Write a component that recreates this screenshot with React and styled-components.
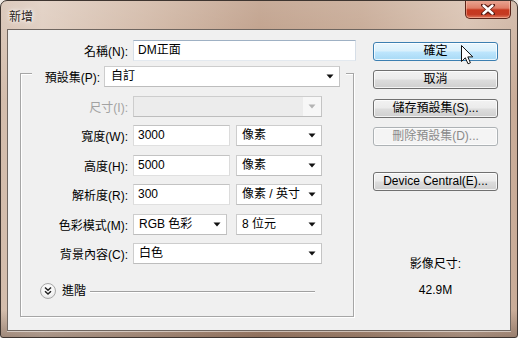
import React from "react";
import styled, { createGlobalStyle } from "styled-components";

const GlobalStyle = createGlobalStyle`
  html, body {
    margin: 0;
    padding: 0;
    background: #efe9e3;
  }
  body {
    font-family: "Liberation Sans", "Noto Sans CJK TC", sans-serif;
    font-size: 12px;
    color: #000;
  }
`;

//window frame
const Window = styled.div`
  position: relative;
  width: 518px;
  height: 338px;
  box-sizing: border-box;
  border: 1px solid #3e3530;
  border-radius: 7px 7px 3px 3px;
  overflow: hidden;
  display: flex;
  flex-direction: column;
  background: linear-gradient(
      180deg,
      rgba(255, 255, 255, 0.22) 0%,
      rgba(255, 255, 255, 0) 30%,
      rgba(0, 0, 0, 0) 92%,
      rgba(60, 40, 30, 0.35) 100%
    ),
    linear-gradient(
      90deg,
      #d3bcab 0%,
      #dcc8b9 8%,
      #cdb19d 28%,
      #b8947c 50%,
      #c09f88 70%,
      #d4baa7 90%,
      #c9ac98 100%
    );
`;

const TitleBar = styled.div`
  height: 28px;
  display: flex;
  align-items: center;
  padding: 0 6px 0 8px;
`;

const Title = styled.span`
  font-family: "Noto Sans CJK TC", sans-serif;
  font-size: 12px;
  color: #2a2420;
  text-shadow: 0 0 6px #fff, 0 0 3px #fff;
`;

const CloseButton = styled.div`
  margin-left: auto;
  align-self: flex-start;
  margin-top: -1px;
  width: 46px;
  height: 19px;
  box-sizing: border-box;
  border: 1px solid #5b2419;
  border-top: none;
  border-radius: 0 0 5px 5px;
  display: flex;
  align-items: center;
  justify-content: center;
  background: linear-gradient(
    180deg,
    #eaa996 0%,
    #df7e67 45%,
    #c7381f 55%,
    #c43a22 80%,
    #e07a5f 100%
  );
  box-shadow: inset 0 0 0 1px rgba(255, 210, 190, 0.45);
`;

//client area
const Client = styled.div`
  flex: 1;
  margin: 0 6px 6px 6px;
  border: 1px solid #6f6660;
  background: #f0f0f0;
  display: flex;
  box-shadow: 0 1px 0 rgba(255, 255, 255, 0.5);
`;

const LeftColumn = styled.div`
  width: 365px;
  padding-top: 10px;
  display: flex;
  flex-direction: column;
`;

const RightColumn = styled.div`
  width: 125px;
  padding-top: 11.5px;
  display: flex;
  flex-direction: column;
  align-items: stretch;
`;

const Row = styled.div`
  display: flex;
  align-items: center;
  height: 21px;
  gap: ${(p) => p.gap || 5}px;
`;

const Label = styled.span`
  width: ${(p) => p.width}px;
  flex-shrink: 0;
  text-align: right;
  white-space: nowrap;
  color: ${(p) => (p.disabled ? "#a2a2a2" : "#000")};
`;

const TextBox = styled.div`
  width: ${(p) => p.width}px;
  height: 21px;
  box-sizing: border-box;
  background: #fff;
  border: 1px solid;
  border-color: ${(p) =>
    p.blue ? "#9fb1c4 #d6dee7 #e3e9ef #d6dee7" : "#c3c3c3 #dcdcdc #e0e0e0 #dcdcdc"};
  padding: 0 4px;
  display: flex;
  align-items: center;
  line-height: 19px;
`;

const Select = styled.div`
  position: relative;
  width: ${(p) => p.width}px;
  height: 21px;
  box-sizing: border-box;
  background: ${(p) => (p.disabled ? "#ececec" : "#fff")};
  border: 1px solid;
  border-color: #cdcdcd #c4c4c4 #bdbdbd #cdcdcd;
  padding: 0 ${(p) => p.pad || 5}px;
  display: flex;
  align-items: center;
  line-height: 19px;
  white-space: nowrap;
`;

const SelectText = styled.span`
  flex: 1;
`;

const ArrowBox = styled.span`
  width: 18px;
  height: 19px;
  margin-right: -${(p) => p.pad || 5}px;
  display: flex;
  align-items: center;
  justify-content: center;
  background: ${(p) => (p.disabled ? "#f7f7f7" : "transparent")};
`;

const Arrow = ({ disabled, pad }) => (
  <ArrowBox disabled={disabled} pad={pad}>
    <svg width="8" height="5" viewBox="0 0 8 5">
      <path d="M0.5 0.5 H7.5 L4 4.5 Z" fill={disabled ? "#b4b4b4" : "#111"} />
    </svg>
  </ArrowBox>
);

const NameRow = styled(Row)`
  margin-left: 0;
`;

//group box
const GroupBox = styled.div`
  margin: 12px 0 0 12px;
  width: 334px;
  height: 244px;
  box-sizing: border-box;
  border: 1px solid #a6a6a6;
  box-shadow: inset 1px 1px 0 #fff, 1px 1px 0 #fff;
  display: flex;
  flex-direction: column;
  gap: 8.5px;
`;

const Legend = styled(Row)`
  margin: -8px 0 0 11px;
  width: 314px;
  padding-right: 6px;
  box-sizing: border-box;
  background: #f0f0f0;
  gap: 4px;
`;

const AdvancedRow = styled.div`
  display: flex;
  align-items: center;
  height: 16px;
  margin: 10.5px 0 0 19px;
`;

const Circle = styled.span`
  width: 16px;
  height: 16px;
  box-sizing: border-box;
  border-radius: 50%;
  border: 1px solid #a8a8a8;
  background: radial-gradient(circle at 50% 35%, #ffffff 0%, #f4f4f4 55%, #d8d8d8 100%);
  display: flex;
  align-items: center;
  justify-content: center;
`;

const AdvancedText = styled.span`
  margin-left: 6px;
  line-height: 16px;
`;

const Rule = styled.span`
  margin-left: 4px;
  width: 225px;
  height: 1px;
  background: #a0a0a0;
  box-shadow: 0 1px 0 #fff;
`;

//buttons
const Button = styled.div`
  position: relative;
  height: 19px;
  box-sizing: border-box;
  margin-bottom: ${(p) => p.mb ?? 9.5}px;
  margin-top: ${(p) => p.mt || 0}px;
  border: 1px solid ${(p) => (p.hover ? "#3c7fb1" : p.disabled ? "#adb2b5" : "#707070")};
  border-radius: 3px;
  display: flex;
  align-items: center;
  justify-content: center;
  line-height: 17px;
  color: ${(p) => (p.disabled ? "#8a8a8a" : "#000")};
  background: ${(p) =>
    p.hover
      ? "linear-gradient(180deg, #eaf6fd 0%, #d9f0fc 48%, #bee6fd 52%, #a7d9f5 100%)"
      : p.disabled
      ? "#f4f4f4"
      : "linear-gradient(180deg, #f2f2f2 0%, #ebebeb 48%, #dddddd 52%, #cfcfcf 100%)"};
  box-shadow: inset 0 0 0 1px rgba(255, 255, 255, 0.75);
`;

const Cursor = styled.svg`
  position: absolute;
  left: 87px;
  top: 2px;
`;

const SizeInfo = styled.div`
  margin-top: 65px;
  text-align: center;
  line-height: 16px;
`;

const SizeValue = styled.div`
  margin-top: 10px;
  text-align: center;
  line-height: 16px;
`;

const LABEL_W = 107;

const App = () => {
  return (
    <>
      <GlobalStyle />
      <Window>
        <TitleBar>
          <Title>新增</Title>
          <CloseButton>
            <svg width="14" height="11" viewBox="0 0 14 11">
              <path
                d="M2 1 L7 4.3 L12 1 M2 10 L7 6.7 L12 10 M2 1 L12 10 M12 1 L2 10"
                stroke="#5a1a10"
                strokeWidth="4"
                strokeLinecap="round"
                fill="none"
              />
              <path
                d="M2.5 1.5 L11.5 9.5 M11.5 1.5 L2.5 9.5"
                stroke="#fff"
                strokeWidth="2.4"
                strokeLinecap="round"
                fill="none"
              />
            </svg>
          </CloseButton>
        </TitleBar>
        <Client>
          <LeftColumn>
            <NameRow>
              <Label width={120}>名稱(N):</Label>
              <TextBox width={223} blue>
                DM正面
              </TextBox>
            </NameRow>
            <GroupBox>
              <Legend>
                <Label width={68}>預設集(P):</Label>
                <Select width={236} pad={6}>
                  <SelectText>自訂</SelectText>
                  <Arrow pad={6} />
                </Select>
              </Legend>
              <Row>
                <Label width={LABEL_W} disabled>
                  尺寸(I):
                </Label>
                <Select width={189} disabled>
                  <SelectText />
                  <Arrow disabled />
                </Select>
              </Row>
              <Row>
                <Label width={LABEL_W}>寬度(W):</Label>
                <TextBox width={97}>3000</TextBox>
                <Select width={86} style={{ marginLeft: 1 }}>
                  <SelectText>像素</SelectText>
                  <Arrow />
                </Select>
              </Row>
              <Row>
                <Label width={LABEL_W}>高度(H):</Label>
                <TextBox width={97}>5000</TextBox>
                <Select width={86} style={{ marginLeft: 1 }}>
                  <SelectText>像素</SelectText>
                  <Arrow />
                </Select>
              </Row>
              <Row>
                <Label width={LABEL_W}>解析度(R):</Label>
                <TextBox width={97}>300</TextBox>
                <Select width={86} style={{ marginLeft: 1 }}>
                  <SelectText>像素 / 英寸</SelectText>
                  <Arrow />
                </Select>
              </Row>
              <Row>
                <Label width={LABEL_W}>色彩模式(M):</Label>
                <Select width={94}>
                  <SelectText>RGB 色彩</SelectText>
                  <Arrow />
                </Select>
                <Select width={86} style={{ marginLeft: 4 }}>
                  <SelectText>8 位元</SelectText>
                  <Arrow />
                </Select>
              </Row>
              <Row>
                <Label width={LABEL_W}>背景內容(C):</Label>
                <Select width={189}>
                  <SelectText>白色</SelectText>
                  <Arrow />
                </Select>
              </Row>
              <AdvancedRow>
                <Circle>
                  <svg width="10" height="10" viewBox="0 0 10 10">
                    <path
                      d="M2 1.5 L5 4.3 L8 1.5 M2 5.2 L5 8 L8 5.2"
                      stroke="#222"
                      strokeWidth="1.5"
                      fill="none"
                    />
                  </svg>
                </Circle>
                <AdvancedText>進階</AdvancedText>
                <Rule />
              </AdvancedRow>
            </GroupBox>
          </LeftColumn>
          <RightColumn>
            <Button hover>
              確定
              <Cursor width="13" height="20" viewBox="0 0 13 20">
                <path
                  d="M0.5 0.5 L0.5 16.5 L4.3 12.8 L7 18.8 L9.4 17.8 L6.8 11.9 L11.8 11.9 Z"
                  fill="#fff"
                  stroke="#111"
                  strokeWidth="1"
                  strokeLinejoin="round"
                />
              </Cursor>
            </Button>
            <Button>取消</Button>
            <Button>儲存預設集(S)...</Button>
            <Button disabled mb={0}>
              刪除預設集(D)...
            </Button>
            <Button mt={25.5} mb={0}>
              Device Central(E)...
            </Button>
            <SizeInfo>影像尺寸:</SizeInfo>
            <SizeValue>42.9M</SizeValue>
          </RightColumn>
        </Client>
      </Window>
    </>
  );
};

export default App;
